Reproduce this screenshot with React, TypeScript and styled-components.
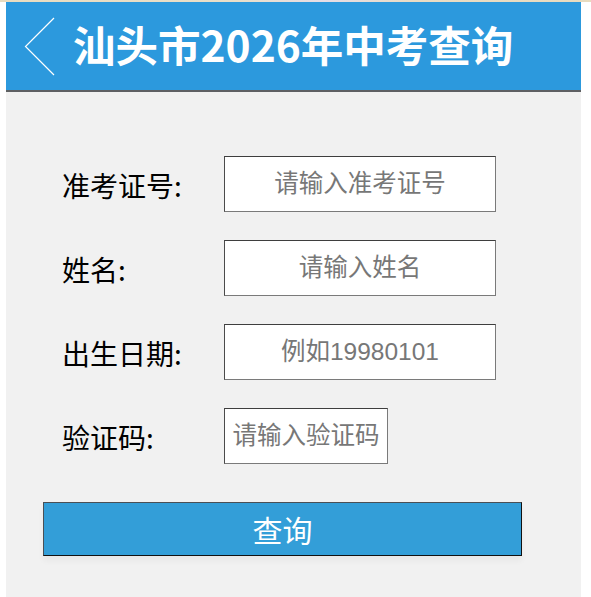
import React from "react";
import styled, { createGlobalStyle } from "styled-components";

const Global = createGlobalStyle`
  html, body { margin: 0; padding: 0; background: #ffffff; }
  body { font-family: "Noto Sans CJK SC", "Noto Sans", sans-serif; }
  * { box-sizing: border-box; }
`;

const TopStrip = styled.div`
  height: 2px;
  background: linear-gradient(90deg, #e9dcc0 0%, #eadfc9 40%, #e6dde6 55%, #e9dcc4 70%, #e8dbbf 100%);
`;

const Page = styled.div`
  margin-left: 6px;
  width: 575px;
  display: flex;
  flex-direction: column;
`;

const Header = styled.header`
  height: 90px;
  background: #2c99dd;
  border-bottom: 2px solid #5e6063;
  display: flex;
  align-items: center;
  padding-left: 18px;
`;

const Back = styled.svg`
  width: 32px;
  height: 60px;
  flex: none;
  margin-top: 1px;
`;

const Title = styled.h1`
  margin: -3px 0 0 17px;
  color: #ffffff;
  font-family: "Noto Sans CJK SC", "Noto Sans", sans-serif;
  font-weight: 700;
  font-size: 42.5px;
  line-height: 1;
`;

const Content = styled.main`
  background: #f1f1f1;
  padding: 64px 0 43px 0;
  display: flex;
  flex-direction: column;
`;

const Form = styled.form`
  display: flex;
  flex-direction: column;
  gap: 28px;
  padding-left: 56px;
`;

const Row = styled.div`
  display: flex;
  align-items: center;
  height: 56px;
`;

const Label = styled.label`
  width: 162px;
  flex: none;
  font-size: 28px;
  color: #000000;
  line-height: 1;
  margin-top: 2px;
`;

const Field = styled.input<{ $w: number }>`
  width: ${(p) => p.$w}px;
  height: 56px;
  padding: 0;
  margin: 0;
  border: 1px solid #7a7a7a;
  border-top-color: #3e3e3e;
  border-left-color: #4a4a4a;
  background: #ffffff;
  text-align: center;
  font-family: "Liberation Sans", "Noto Sans CJK SC", sans-serif;
  font-size: 24.5px;
  color: #333;
  outline: none;
  &::placeholder {
    color: #777777;
  }
`;

const Submit = styled.button`
  margin: 38px 0 0 37px;
  width: 479px;
  height: 54px;
  background: #339ed8;
  border: 1px solid #111111;
  border-top-color: #4a4f55;
  border-left-color: #4a4f55;
  color: #ffffff;
  font-family: "Noto Sans CJK SC", "Noto Sans", sans-serif;
  font-size: 30px;
  line-height: 1;
  padding: 0;
  box-shadow: 0 5px 6px rgba(0, 0, 0, 0.04);
`;

const rows = [
  { label: "准考证号:", placeholder: "请输入准考证号", w: 272 },
  { label: "姓名:", placeholder: "请输入姓名", w: 272 },
  { label: "出生日期:", placeholder: "例如19980101", w: 272 },
  { label: "验证码:", placeholder: "请输入验证码", w: 164 },
];

export default function App() {
  return (
    <>
      <Global />
      <TopStrip />
      <Page>
        <Header>
          <Back viewBox="0 0 32 60">
            <polyline
              points="30,1 1.5,29.5 30,58"
              fill="none"
              stroke="#ffffff"
              strokeWidth="1.2"
            />
          </Back>
          <Title>汕头市2026年中考查询</Title>
        </Header>
        <Content>
          <Form onSubmit={(e) => e.preventDefault()}>
            {rows.map((r) => (
              <Row key={r.label}>
                <Label>{r.label}</Label>
                <Field $w={r.w} placeholder={r.placeholder} />
              </Row>
            ))}
          </Form>
          <Submit type="button">查询</Submit>
        </Content>
      </Page>
    </>
  );
}
